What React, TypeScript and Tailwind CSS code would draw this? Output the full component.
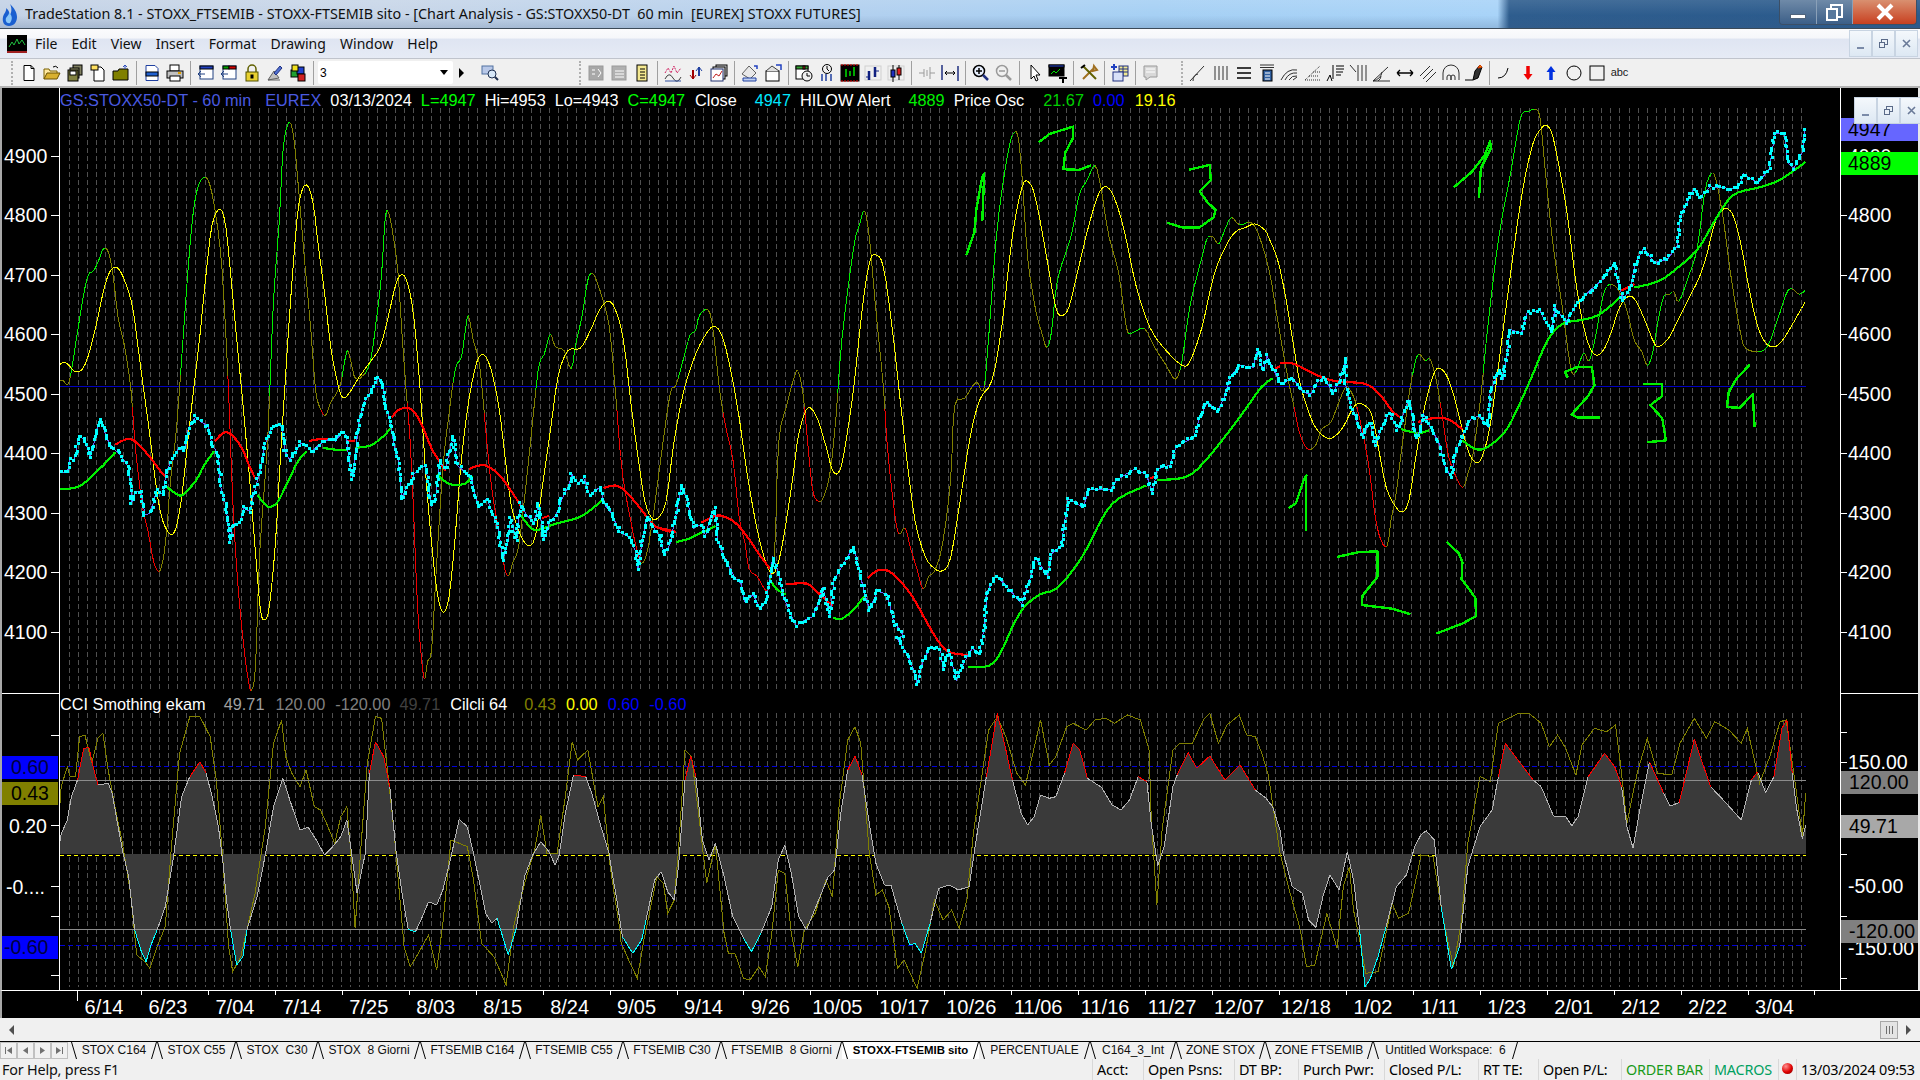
import React from "react";

type P = [number, number];
const pairs = (a: number[], fx: (x: number) => number, fy: (y: number) => number): P[] => {
  const o: P[] = [];
  for (let i = 0; i + 1 < a.length; i += 2) o.push([fx(a[i]), fy(a[i + 1])]);
  return o;
};
const yz = (y: number) => y / 2.703;
const z7 = (a: number[]) => pairs(a, (x) => 50 + x / 2.529, (y) => 110 + yz(y));
const z8 = (a: number[]) => pairs(a, (x) => 660 + x / 2.529, (y) => 110 + yz(y));
const z9 = (a: number[]) => pairs(a, (x) => 1270 + x / 2.703, (y) => 100 + yz(y));
const z4 = (a: number[]) => pairs(a, (x) => x / 2.45, (y) => 680 + y / 3);
const z10 = (a: number[]) => pairs(a, (x) => 620 + x / 2.306, (y) => 700 + y / 3);
const z6 = (a: number[]) => pairs(a, (x) => 1280 + x / 2.45, (y) => 680 + y / 3);

const smooth = (p: P[]): P[] => {
  const o: P[] = [];
  for (let i = 0; i < p.length - 1; i++) {
    const a = p[Math.max(0, i - 1)], b = p[i], c = p[i + 1], d = p[Math.min(p.length - 1, i + 2)];
    for (let k = 0; k < 3; k++) {
      const t = k / 3, t2 = t * t, t3 = t2 * t;
      o.push([
        0.5 * (2 * b[0] + (c[0] - a[0]) * t + (2 * a[0] - 5 * b[0] + 4 * c[0] - d[0]) * t2 + (3 * b[0] - a[0] - 3 * c[0] + d[0]) * t3),
        0.5 * (2 * b[1] + (c[1] - a[1]) * t + (2 * a[1] - 5 * b[1] + 4 * c[1] - d[1]) * t2 + (3 * b[1] - a[1] - 3 * c[1] + d[1]) * t3),
      ]);
    }
  }
  o.push(p[p.length - 1]);
  return o;
};
const str = (p: P[]) => p.map(([x, y]) => `${x.toFixed(1)},${y.toFixed(1)}`).join(" ");

const osc = smooth([
  ...z7([22,735,32,730,45,742,55,700,68,610,85,500,97,445,110,435,122,410,135,375,148,385,160,450,172,560,185,620,195,680,205,760,215,900,225,1000,235,1080,248,1140,262,1220,275,1248,285,1220,295,1140,305,1000,320,860,335,640,350,420,362,280,375,205,392,182,405,205,420,290,435,430,450,720,462,1050,475,1280,490,1450,503,1550,510,1568,520,1500,530,1200,550,900,565,520,580,300,590,100,605,33,617,80,630,230,645,420,660,600,672,760,685,810,697,825,710,790,722,770,735,740,745,680,753,650,763,690,772,725,790,720,810,680,825,570,838,450,848,290,857,280,868,340,880,440,890,600,900,750,910,880,920,1100,930,1350,945,1535,955,1490,965,1460,975,1280,985,1100,995,950,1008,830,1025,700,1040,670,1050,600,1058,555,1070,620,1085,680,1095,780,1105,900,1118,1030,1135,1140,1150,1240,1160,1258,1170,1225,1185,1180,1200,1050,1215,900,1235,700,1250,660,1265,606,1278,640,1300,650,1318,700,1330,630,1345,560,1360,460,1372,442,1385,470,1400,520,1415,590,1430,760,1440,900,1450,1000,1465,1090,1480,1170,1495,1225,1510,1195,1525,1100]),
  ...z8([0,960,25,770,40,745,60,670,75,610,90,595,100,555,122,540,135,600,150,750,165,850,185,950,200,1100,215,1170,225,1240,245,1260,265,1295,275,1290,290,1190,300,900,320,800,340,720,350,707,362,770,372,880,385,1020,397,1055,412,1050,430,980,445,830,460,620,490,370,505,310,517,272,530,350,545,530,565,750,575,910,590,1060,603,1145,620,1130,635,1190,650,1240,665,1295,680,1260,695,1245,715,1170,735,1000,745,800,770,780,800,735,815,760,825,700,850,350,870,180,885,90,895,62,905,70,915,170,930,400,950,540,965,600,978,642,990,600,1005,460,1040,340,1060,230,1080,190,1100,150,1115,210,1135,340,1160,440,1180,590,1195,602,1225,590,1250,640,1280,690,1303,728,1320,680,1340,530,1370,400,1385,345,1400,345,1413,362,1430,320,1445,290,1465,310,1495,305,1515,340,1540,430]),
  ...z9([15,560,30,650,50,760,65,830,80,900,95,935,108,945,125,930,140,890,165,870,185,820,205,775,220,790,235,830,255,920,270,1010,285,1130,300,1190,317,1205,328,1130,340,1070,355,950,370,840,380,770,395,700,405,688,420,705,433,700,450,760,465,850,480,950,495,1000,520,1048,535,1010,550,950,570,800,590,600,620,360,650,200,665,110,680,40,700,30,718,25,730,50,745,200,765,390,790,560,812,720,825,738,840,700,850,685,863,705,880,640,900,530,915,500,935,505,955,540,970,590,985,650,1005,680,1020,718,1035,680,1050,590,1065,530,1080,525,1092,518,1105,545,1130,480,1155,400,1175,250,1192,200,1205,215,1225,320,1245,470,1270,620,1285,670,1320,680,1345,665,1370,600,1395,525,1410,510,1430,525,1447,515]),
]);
const yellow = smooth([
  ...z7([22,690,35,682,48,690,60,705,78,705,95,670,115,590,135,490,150,440,165,425,180,440,195,480,210,540,225,660,240,780,255,900,270,1030,285,1110,305,1147,320,1125,335,1030,350,880,365,740,380,600,395,440,410,310,430,268,445,320,460,480,475,650,490,820,505,1000,520,1200,532,1350,543,1378,555,1340,570,1170,585,900,600,650,615,420,630,250,648,202,665,250,680,380,695,500,710,640,730,750,743,778,760,760,780,725,810,680,835,640,855,560,875,470,890,445,905,470,920,560,935,740,950,980,965,1170,980,1310,995,1358,1010,1310,1025,1150,1040,950,1060,780,1080,680,1097,662,1115,700,1135,800,1150,930,1165,1060,1180,1120,1195,1160,1212,1178,1228,1150,1245,1020,1265,870,1285,720,1310,650,1340,645,1365,600,1390,540,1412,517,1430,540,1450,620,1470,800,1490,960,1505,1060,1520,1100,1535,1105]),
  ...z8([15,1060,35,900,60,760,90,660,120,600,140,585,160,620,180,710,200,830,220,980,245,1130,270,1230,290,1250,310,1170,335,1000,350,880,370,810,385,810,400,840,420,910,435,970,450,982,465,930,490,750,510,550,530,410,548,393,565,425,585,570,605,760,625,950,645,1110,670,1205,695,1240,715,1245,735,1210,760,1050,785,880,810,780,840,730,865,580,890,350,915,210,932,195,950,240,975,380,1000,530,1017,555,1035,530,1060,420,1085,310,1110,225,1130,208,1150,240,1175,330,1205,480,1240,590,1280,650,1320,690,1340,680,1370,590,1400,450,1430,370,1455,330,1480,318,1505,308,1530,325]),
  ...z9([0,380,20,430,40,520,60,640,80,760,100,830,120,880,140,905,160,915,180,905,200,880,220,840,235,822,255,825,275,850,295,950,315,1050,340,1100,357,1113,375,1085,395,960,420,820,445,735,462,727,480,750,500,810,520,890,540,960,560,980,575,960,595,880,620,700,650,470,680,260,710,120,735,75,750,70,765,100,785,200,805,320,825,480,845,600,865,670,885,690,905,670,925,620,945,560,970,530,990,545,1015,600,1040,660,1055,665,1080,640,1105,590,1130,540,1160,480,1180,420,1200,340,1220,300,1238,295,1255,320,1275,400,1295,510,1315,600,1335,650,1360,668,1385,650,1410,610,1430,575,1447,545]),
]);
const trendGreen: P[][] = [
  z7([22,1025,60,1022,85,1010,110,985,135,960,165,925]),
  z7([295,1018,315,1035,332,1042,350,1025,370,1000,390,960,415,922]),
  z7([525,1040,540,1062,556,1073,575,1060,595,1020,615,975,630,945,650,922]),
  z7([690,913,720,918,750,918]),
  z7([772,913,810,907,840,885,862,860]),
  z7([980,985,1000,1005,1020,1013,1050,1010,1068,990]),
  z7([1190,1095,1215,1128,1235,1135,1280,1118,1340,1100,1380,1070,1400,1050]),
  z8([40,1168,70,1160,100,1145,140,1125]),
  z8([278,1270,295,1295,318,1310]),
  z8([437,1373,460,1375,490,1350,520,1310]),
  z8([778,1505,830,1503,860,1470,890,1400,920,1345,960,1310,1000,1295,1040,1250,1080,1185,1120,1100,1160,1050,1230,1015]),
  z8([1257,1000,1320,995,1360,970,1420,895,1480,810,1520,750,1550,725]),
  z9([355,890,400,900,430,893]),
  z9([520,920,545,938,570,945,600,930,640,890,680,810,715,730,750,650,790,605,840,595,890,580,945,535]),
  z9([985,507,1050,490,1100,455,1155,405,1200,330,1235,275,1265,250,1320,237,1370,220,1410,195,1447,168]),
];
const trendRed: P[][] = [
  z7([165,905,185,893,205,890,225,905,250,935,275,970,295,995]),
  z7([417,895,435,875,450,872,470,890,490,925,505,965,520,998]),
  z7([655,895,680,890,710,890]),
  z7([750,897,772,893]),
  z7([865,830,880,812,900,805,920,815,940,850,965,915,985,950,1000,975]),
  z7([1060,970,1090,960,1110,965,1135,985,1160,1020,1185,1060,1200,1085]),
  z7([1245,1103,1262,1097]),
  z7([1400,1022,1430,1015,1455,1030,1480,1060,1510,1100,1530,1125,1568,1140]),
  z8([0,1130,40,1140]),
  z8([105,1115,140,1097,165,1100,195,1120,225,1160,250,1200,278,1240]),
  z8([318,1282,370,1280,395,1300,420,1325,437,1340]),
  z8([525,1265,550,1245,575,1245,600,1265,635,1310,670,1375,700,1430,730,1465,780,1473]),
  z8([1240,995,1257,990]),
  z8([1555,700,1568,692]),
  z9([27,712,60,712,90,725,130,745,175,760,220,763,265,770,300,800,330,840,355,860]),
  z9([400,870,440,860,480,862,520,890]),
  z9([950,515,985,497]),
];
const price: P[] = [
  ...z7([22,970,30,980,45,975,50,945,60,945,65,930,72,880,85,890,95,915,102,940,110,905,118,875,125,835,135,860,145,890,158,912,175,930,190,950,200,970,207,1060,218,1030,232,1035,240,1095,252,1090,262,1060,270,1025,285,1040,295,975,310,945,325,915,340,920,350,860,368,830,385,845,400,855,410,905,425,930,432,1020,445,1070,455,1165,462,1120,480,1115,490,1075,505,1085,515,1040,530,980,545,900,558,865,570,850,585,855,595,925,605,945,620,925,635,900,650,905,660,925,680,905,705,890,722,895,740,870,750,880,755,940,765,995,772,935,780,850,795,790,815,755,830,722,842,745,852,810,862,850,870,905,880,945,885,985,890,1055,900,1020,915,1010,920,985,935,970,950,960,965,1070,975,1050,985,950,1000,970,1010,925,1020,885,1030,960,1045,975,1065,990,1075,1040,1085,1075,1105,1050,1120,1090,1135,1140,1145,1215,1155,1185,1165,1105,1180,1165,1190,1065,1205,1095,1225,1115,1235,1065,1250,1160,1265,1110,1280,1095,1295,1050,1310,1020,1320,985,1335,1010,1350,995,1365,1040,1390,1020,1405,1070,1420,1090,1440,1140,1465,1155,1480,1190,1487,1240,1500,1150,1510,1100,1530,1135,1545,1155]),
  ...z8([0,1150,10,1200,25,1175,45,1070,55,1015,70,1060,85,1130,105,1120,115,1150,130,1090,140,1080,145,1160,155,1190,170,1225,190,1265,205,1280,215,1330,235,1310,255,1350,270,1320,285,1210,300,1250,310,1310,325,1350,345,1395,365,1380,385,1370,400,1335,412,1290,430,1370,440,1270,465,1225,490,1180,505,1250,518,1310,530,1350,550,1300,575,1310,590,1380,615,1420,600,1430,625,1470,640,1510,650,1550,665,1490,685,1450,710,1460,715,1510,730,1465,750,1540,770,1490,790,1455,808,1470,820,1400,828,1300,850,1260,870,1280,895,1310,915,1335,935,1270,950,1210,965,1235,980,1260,990,1200,1015,1175,1025,1100,1032,1050,1070,1075,1085,1025,1140,1025,1155,1000,1200,970,1230,985,1245,1035,1258,970,1290,960,1305,910,1350,885,1365,830,1385,790,1410,815,1430,770,1440,725,1465,690,1500,695,1512,645,1525,705,1535,665]),
  ...z9([30,770,60,750,90,790,110,795,130,760,145,750,170,790,185,765,205,700,205,770,220,830,240,880,250,910,270,870,285,935,300,890,322,845,345,890,375,810,385,855,398,915,415,850,445,905,460,935,470,985,490,1020,500,960,520,905,545,860,565,855,590,885,595,790,620,730,630,755,650,620,680,630,695,575,730,570,745,600,762,625,770,560,800,600,830,550,870,510,900,485,930,440,940,490,955,540,975,505,985,450,1010,400,1040,440,1075,430,1100,395,1110,315,1145,240,1160,265,1190,235,1265,240,1280,200,1320,225,1350,185,1365,90,1390,90,1400,170,1415,185,1440,140,1445,75]),
];
const dotsPath = (() => {
  let seed = 7;
  const r = () => {
    seed = (seed * 16807) % 2147483647;
    return seed / 2147483647 - 0.5;
  };
  let d = "";
  for (let i = 0; i < price.length - 1; i++) {
    const [a, b] = price[i], [c, e] = price[i + 1];
    const len = Math.hypot(c - a, e - b);
    const n = Math.max(1, Math.round(len / 3.6));
    for (let k = 0; k < n; k++) {
      const x = a + ((c - a) * k) / n + r() * 2.5;
      const y = b + ((e - b) * k) / n + r() * 3.5;
      d += `M${Math.round(x - 1.5)} ${Math.round(y - 1.5)}h3v3h-3z`;
    }
  }
  return d;
})();
const hand: P[][] = [
  z8([775,392,795,330,800,270,815,180,820,172,815,300]),
  z8([958,87,985,65,1045,45,1045,75,1025,115,1020,160,1060,162,1090,150]),
  z8([1337,162,1390,148,1393,190,1365,220,1385,250,1405,270,1400,290,1365,317,1320,317,1283,305]),
  z9([497,236,545,195,580,150,595,112,597,130,570,185,565,265]),
  z9([50,1103,70,1090,90,1030,98,1015,97,1165]),
  z9([182,1235,240,1222,290,1220,290,1290,250,1340,248,1365,330,1375,380,1390]),
  z9([478,1195,510,1225,520,1250,518,1295,555,1345,557,1395,520,1415,450,1442]),
  z9([805,750,797,735,830,722,870,722,877,770,860,800,815,850,830,858,893,858]),
  z9([1008,768,1060,768,1060,800,1028,825,1060,860,1070,920,1020,925]),
  z9([1297,715,1260,755,1240,790,1235,830,1270,832,1305,795,1310,885]),
];
const oscPaths = (() => {
  let g = "", o = "", r = "";
  for (let i = 0; i < osc.length - 1; i++) {
    const [a, b] = osc[i], [c, e] = osc[i + 1];
    const s = `M${a.toFixed(1)} ${b.toFixed(1)}L${c.toFixed(1)} ${e.toFixed(1)}`;
    if (e < b && e < 370) g += s;
    else if (e > b && e > 413) r += s;
    else o += s;
  }
  return { g, o, r };
})();

const cci: P[] = [
  ...z4([145,495,150,462,165,420,175,350,190,300,205,205,218,203,230,270,240,315,265,310,275,340,285,410,300,510,315,590,330,750,345,810,358,845,370,795,385,750,405,680,425,530,445,350,465,290,490,245,505,280,520,350,535,440,547,555,555,660,565,750,580,855,595,830,605,750,630,650,650,525,670,380,693,295,710,360,735,450,755,442,775,480,795,525,815,500,835,470,850,420,862,525,875,640,895,520,905,280,920,185,940,230,955,320,970,510,985,640,1000,748,1018,755,1035,710,1050,665,1070,675,1085,630,1105,530,1125,418,1145,440,1160,520,1175,610,1190,700,1205,730,1218,715,1245,825,1265,745,1285,590,1305,525,1325,485,1345,515,1360,555,1370,525,1385,400,1405,285,1435,290,1450,340,1470,430,1492,520,1500,580,1510,650,1525,770,1550,820]),
  ...z10([50,720,60,660,80,540,95,515,110,575,125,600,135,500,150,240,163,168,175,230,190,420,205,480,220,430,240,530,260,650,285,715,303,755,325,700,350,620,365,480,380,435,395,520,412,650,430,690,455,610,480,530,495,510,510,330,525,210,542,168,558,225,575,370,590,490,610,555,625,555,650,670,668,735,680,730,695,760,715,670,735,565,760,555,780,570,805,560,820,430,845,230,870,40,890,150,905,240,925,340,940,375,955,350,970,285,990,295,1005,290,1025,220,1045,130,1060,150,1078,235,1110,262,1135,315,1155,330,1175,300,1195,230,1215,245,1225,370,1240,498,1255,440,1275,260,1285,225,1310,158,1330,205,1360,168,1395,240,1430,195,1465,270,1490,295,1505,320]),
  ...z6([0,450,8,520,30,620,55,640,70,720,88,742,105,650,122,585,145,630,165,515,180,600,195,750,208,920,220,900,240,830,260,740,285,620,310,585,330,500,345,465,358,452,378,480,395,680,420,868,440,800,460,560,470,520,490,440,520,390,535,290,552,190,580,235,620,300,640,320,670,408,700,410,715,437,730,410,755,290,795,220,820,260,837,320,850,440,865,505,880,400,905,245,940,340,955,378,978,368,1015,178,1055,320,1090,365,1130,420,1155,300,1170,275,1190,338,1210,290,1230,145,1242,120,1255,280,1265,380,1280,477,1288,435]),
];
const olive: P[] = [
  ...z4([145,400,150,320,165,260,172,290,185,290,195,170,208,165,225,250,240,175,252,160,265,270,280,370,300,490,320,640,335,825,355,845,367,865,385,800,405,740,420,500,440,220,465,110,490,110,515,170,530,300,545,520,560,800,570,875,590,830,625,640,650,440,670,190,690,120,700,230,715,280,735,320,750,270,770,380,785,390,800,430,820,490,835,410,850,380,860,525,870,745,885,490,900,250,920,110,935,115,950,280,965,450,990,800,1005,860,1020,830,1050,765,1070,870,1085,730,1105,480,1125,490,1145,500,1160,600,1180,790,1210,830,1240,915,1260,730,1290,590,1310,510,1325,405,1340,520,1365,520,1385,350,1402,185,1415,240,1440,210,1465,380,1478,350,1495,560,1520,760]),
  ...z10([0,720,20,780,40,835,55,720,85,530,100,550,110,640,125,600,135,450,150,150,165,170,180,330,200,550,220,430,240,700,250,760,265,760,285,835,300,840,320,800,335,830,350,700,365,510,380,520,395,700,410,800,425,690,450,640,475,540,490,590,505,320,525,120,542,80,555,130,575,460,590,585,605,570,620,620,640,805,655,780,685,865,705,750,725,600,745,660,765,630,782,685,800,600,815,400,850,90,870,50,890,110,915,220,935,255,970,60,990,195,1005,170,1030,80,1045,70,1075,90,1095,60,1120,55,1140,70,1170,45,1200,60,1220,150,1225,350,1238,615,1250,390,1275,150,1290,130,1320,130,1345,60,1360,40,1380,130,1400,75,1428,45,1445,105,1465,110,1480,160,1495,225]),
  ...z6([0,520,25,640,50,750,65,860,85,855,100,780,115,700,140,805,155,620,170,560,180,690,195,780,210,880,240,875,275,670,290,715,315,700,340,560,345,525,375,530,400,720,425,860,445,720,460,490,490,290,515,305,535,130,560,115,585,100,610,100,640,130,660,200,680,165,700,205,725,285,740,195,770,145,800,155,822,135,835,260,850,430,875,280,900,175,925,280,960,285,980,190,1015,115,1045,175,1065,125,1100,150,1130,190,1145,145,1175,310,1200,230,1225,125,1240,120,1260,290,1280,470,1288,340]),
];
const cciPaths = (() => {
  let w = "", r = "", c = "";
  const add = (a: number, b: number, x: number, y: number, col: number) => {
    const s = `M${a.toFixed(1)} ${b.toFixed(1)}L${x.toFixed(1)} ${y.toFixed(1)}`;
    if (col === 0) w += s;
    else if (col === 1) r += s;
    else c += s;
  };
  for (let i = 0; i < cci.length - 1; i++) {
    const [a, b] = cci[i], [x, y] = cci[i + 1];
    const mid = (b + y) / 2;
    add(a, b, x, y, mid < 780 ? 1 : mid > 929 ? 2 : 0);
  }
  return { w, r, c };
})();
const area = `60,854 ${str(cci)} ${cci[cci.length - 1][0].toFixed(1)},854`;

const gridXs: number[] = [];
for (let x = 68.5; x < 1807; x += 9.07) gridXs.push(Math.round(x) + 0.5);

const Chart = () => (
  <svg viewBox="60 88 1780 902" className="block w-[1780px] h-[902px]" fill="none" shapeRendering="crispEdges">
    {gridXs.map((x) => (
      <g key={x} stroke="#505050" strokeDasharray="5 3">
        <line x1={x} x2={x} y1={108} y2={692} />
        <line x1={x} x2={x} y1={713} y2={987} />
      </g>
    ))}
    <line x1={60} x2={1806} y1={386.5} y2={386.5} stroke="#0000c0" />
    <path d={oscPaths.o} stroke="#808000" />
    <path d={oscPaths.r} stroke="#f00000" />
    <path d={oscPaths.g} stroke="#00f000" />
    <polyline points={str(yellow)} stroke="#ffff00" />
    {trendGreen.map((t, i) => (
      <polyline key={i} points={str(smooth(t))} stroke="#00f000" strokeWidth={2.2} />
    ))}
    {trendRed.map((t, i) => (
      <polyline key={i} points={str(smooth(t))} stroke="#ff0000" strokeWidth={2.2} />
    ))}
    <polyline points={str(price)} stroke="#6464ff" />
    <path d={dotsPath} fill="#00ffff" />
    {hand.map((t, i) => (
      <polyline key={i} points={str(t)} stroke="#00f000" strokeWidth={2.4} strokeLinejoin="round" />
    ))}

    <line x1={60} x2={1806} y1={766.5} y2={766.5} stroke="#0000d8" strokeDasharray="5 3" />
    <line x1={60} x2={1806} y1={945.5} y2={945.5} stroke="#0000d8" strokeDasharray="5 3" />
    <line x1={60} x2={1806} y1={855.5} y2={855.5} stroke="#ffff00" strokeDasharray="4 3" />
    <polygon points={area} fill="#3a3a3a" />
    <polyline points={str(olive)} stroke="#808000" />
    <line x1={60} x2={1806} y1={780.5} y2={780.5} stroke="#8c8c8c" />
    <line x1={60} x2={1806} y1={929.5} y2={929.5} stroke="#8c8c8c" />
    <path d={cciPaths.w} stroke="#b4b4b4" />
    <path d={cciPaths.r} stroke="#ff0000" />
    <path d={cciPaths.c} stroke="#00ffff" />
  </svg>
);

/* ---------- toolbar icons ---------- */
const S = ({ children }: { children: React.ReactNode }) => (
  <span className="flex w-[23px] h-[22px] items-center justify-center shrink-0">
    <svg width="20" height="20" viewBox="0 0 20 20" fill="none" stroke="#000" strokeWidth="1">
      {children}
    </svg>
  </span>
);
const Sep = () => <span className="w-[8px] h-[24px] shrink-0 flex justify-center"><span className="w-px h-full bg-[#a0a0a0]" /></span>;
const Grip = ({ cls }: { cls: string }) => (
  <span className={`w-[3px] h-[24px] shrink-0 block border-l-2 border-dotted border-[#b0b0b0] ${cls}`} />
);
const gray = "#9a9a9a";
const T1 = [
  <><path d="M5 2.5h7l3 3v12H5z" fill="#fff" /><path d="M12 2.5v3h3" /></>,
  <><path d="M2 16V6h5l1 2h7v2" fill="#ffe9a0" stroke="#7a6000" /><path d="M2 16l3-6h13l-3 6z" fill="#d8b030" stroke="#6a5000" /><path d="M11 4q3-2 5 1" stroke="#000" /></>,
  <><rect x="8" y="2" width="9" height="10" fill="#808060" /><rect x="5" y="5" width="9" height="10" fill="#a0a070" /><rect x="3" y="7" width="10" height="11" fill="#808040" /><rect x="5" y="8" width="6" height="4" fill="#fff" /></>,
  <><path d="M6 4h7l3 3v11H6z" fill="#fff" /><rect x="3" y="2" width="7" height="5" fill="#ffe060" /></>,
  <><path d="M2 8h5l1-2h9v11H2z" fill="#808000" /><path d="M14 6V2m-2 2 2-2 2 2" stroke="#3050c0" /></>,
];
const T2 = [
  <><path d="M4 2.5h9l3 3v12H4z" fill="#fff" stroke="#2040a0" /><rect x="4" y="9" width="12" height="4" fill="#2060d0" /></>,
  <><rect x="5" y="2" width="9" height="6" fill="#fff" /><rect x="2" y="8" width="16" height="7" fill="#c0c0c0" /><rect x="5" y="13" width="10" height="5" fill="#fff" /><path d="M13 10h3" stroke="#e0a000" strokeWidth="2" /></>,
];
const T3 = [
  <><rect x="4" y="3" width="13" height="13" fill="#fff" stroke="#204080" /><rect x="4" y="3" width="13" height="3" fill="#2040c0" /><path d="M2 11h7M2 11l3-3M2 11l3 3" stroke="#204080" /></>,
  <><rect x="4" y="3" width="13" height="13" fill="#fff" stroke="#204080" /><rect x="4" y="3" width="6" height="3" fill="#00a000" /><rect x="10" y="3" width="7" height="3" fill="#d00000" /><path d="M2 11h7M2 11l3-3M2 11l3 3" stroke="#204080" /></>,
  <><path d="M6 9V6a4 4 0 0 1 8 0v3" stroke="#606000" strokeWidth="1.5" /><rect x="4" y="9" width="12" height="9" fill="#e8d030" stroke="#505000" /><rect x="9" y="12" width="2" height="3" fill="#000" /></>,
  <><path d="M3 17l6-9 5 7z" fill="#c0c0c0" stroke="#606060" /><path d="M9 10l6-7 2 2-6 7z" fill="#5070d0" stroke="#203080" /><path d="M3 17h12" stroke="#606060" /></>,
  <><rect x="3" y="7" width="7" height="7" fill="#20a030" /><rect x="9" y="4" width="7" height="7" fill="#2040d0" /><rect x="10" y="11" width="7" height="7" fill="#d02020" /><rect x="4" y="2" width="6" height="6" fill="#f0e020" /></>,
];
const TMag = <><rect x="2" y="3" width="11" height="8" fill="#b8c8e8" stroke="#5070a0" /><circle cx="12" cy="11" r="4" fill="#d8e8f8" stroke="#203050" /><path d="M15 14l3 3" strokeWidth="2" stroke="#203050" /></>;
const T4 = [
  <><rect x="3" y="3" width="14" height="14" fill="#a8a8a8" stroke={gray} /><path d="M6 7h3M6 11h3M12 6l3 4-3 4" stroke="#fff" /></>,
  <><rect x="3" y="3" width="14" height="14" fill="#b0b0b0" stroke={gray} /><path d="M6 8h9M6 11h9M6 14h9" stroke="#fff" /></>,
  <><rect x="5" y="2" width="10" height="16" fill="#f4e890" /><path d="M8 6h5M8 9h5M8 12h5M8 15h5" /></>,
];
const T5 = [
  <><path d="M2 10l3-5 3 5 3-7 3 7 4-5" stroke="#d02060" strokeDasharray="2 1" /><path d="M2 16q4-8 8-1t8-1" stroke="#404040" /><path d="M2 18h16" stroke="#3050a0" /></>,
  <><path d="M7 16V7" stroke="#a00000" strokeWidth="2" /><path d="M4 12l3 4 3-4" stroke="#a00000" /><path d="M13 4v9" stroke="#2040a0" strokeWidth="2" /><path d="M10 8l3-4 3 4" stroke="#2040a0" /></>,
  <><rect x="7" y="2" width="11" height="11" fill="#d0d0d0" /><rect x="4" y="4" width="12" height="12" fill="#e0e0e0" /><rect x="2" y="6" width="12" height="12" fill="#fff" stroke="#203070" /><path d="M4 15l3-4 3 2 3-5" stroke="#c02020" /></>,
];
const T6 = [
  <><path d="M2 11l7-8 7 7-6 6z" fill="#e8e8e8" stroke="#606060" /><path d="M14 3l3 0 0 3" stroke="#2040c0" strokeWidth="1.5" /><path d="M3 15h13v3H3z" fill="#c0d0f0" stroke="#2040a0" /></>,
  <><rect x="3" y="8" width="13" height="10" fill="#fff" /><path d="M3 8l6-5 7 5" fill="#e0e0e0" stroke="#404040" /><path d="M13 2h5v5" stroke="#2040c0" strokeWidth="1.5" /></>,
];
const T7 = [
  <><rect x="2" y="3" width="12" height="13" fill="#fff" /><rect x="2" y="3" width="12" height="3" fill="#30a030" /><rect x="9" y="3" width="2" height="3" fill="#d02020" /><circle cx="13" cy="13" r="5" fill="#f0f0f0" /><path d="M13 10v3h3" /></>,
  <><circle cx="10" cy="6" r="4.5" fill="#f0f0f0" /><path d="M10 3v3l2 2" /><path d="M5 11v7M9 11v7M14 11v7" stroke="#2040a0" strokeWidth="1.5" /></>,
  <><rect x="1" y="2" width="18" height="16" fill="#000" /><path d="M1 2h18M1 18h18" stroke="#e00000" strokeDasharray="2 1" /><path d="M6 6v8M10 8v5M14 4v9" stroke="#00e000" strokeWidth="1.5" /></>,
  <><rect x="2" y="3" width="16" height="14" fill="#f0f0f0" stroke="#d0d0d0" /><path d="M6 8v9M12 4v10" stroke="#102080" strokeWidth="2.5" /><path d="M3 14h3M12 8h4" stroke="#102080" /></>,
  <><rect x="2" y="3" width="16" height="14" fill="#f0f0f0" stroke="#d0d0d0" /><path d="M7 2v17M13 2v15" stroke="#000" /><rect x="5" y="7" width="4" height="7" fill="#2030c0" /><rect x="11" y="5" width="4" height="7" fill="#e02020" /></>,
];
const T8 = [
  <><path d="M2 10h5M13 10h5M7 6v8M13 4v12M10 7v6" stroke={gray} /></>,
  <><path d="M2 2v15M18 3v15" stroke="#203080" strokeWidth="1.5" /><path d="M5 10h10M5 10l2-2M5 10l2 2M15 10l-2-2M15 10l-2 2" /></>,
];
const T9 = [
  <><circle cx="8" cy="8" r="5.5" fill="#e8f0ff" stroke="#000" strokeWidth="1.5" /><path d="M8 5v6M5 8h6" strokeWidth="1.5" /><path d="M12 12l5 5" strokeWidth="2.5" stroke="#203080" /></>,
  <><circle cx="8" cy="8" r="5.5" fill="#f0f0f0" stroke={gray} strokeWidth="1.5" /><path d="M5 8h6" stroke={gray} strokeWidth="1.5" /><path d="M12 12l5 5" strokeWidth="2.5" stroke={gray} /></>,
];
const T10 = [
  <path d="M6 2v14l3-3 2 5 2-1-2-5h4z" fill="#fff" stroke="#000" />,
  <><rect x="1" y="2" width="15" height="11" fill="#000" /><rect x="1" y="2" width="15" height="2" fill="#2040d0" /><path d="M3 11l3-3 2 2 4-4" stroke="#00e000" /><path d="M11 14h8v2h-3v4h-2v-4h-3z" fill="#000" stroke="none" /></>,
];
const T11 = [
  <><path d="M4 16L14 6M15 3l3 4-4 1z" stroke="#a07020" strokeWidth="2" /><path d="M4 3l13 13" stroke="#606000" strokeWidth="2" /><path d="M2 5l4-3" stroke="#000" strokeWidth="2" /></>,
];
const T12 = <><rect x="9" y="3" width="9" height="10" fill="#f0e890" stroke="#203080" /><path d="M9 6h9M9 9h9M13 3v10" stroke="#203080" /><rect x="3" y="9" width="10" height="9" fill="#d8e0f8" stroke="#203080" /><path d="M1 4h6M4 1v6" stroke="#2040c0" strokeWidth="2" /></>;
const T13 = <><path d="M3 3h13v11H9l-4 3v-3H3z" fill="#d8d8d8" stroke={gray} /><path d="M5 6h9M5 9h9" stroke="#fff" /></>;
const T14 = [
  <path d="M2 18L16 3M5 18q0-6 5-7" stroke="#303030" />,
  <path d="M4 3v14M8 3v14M12 3v14M16 3v14" stroke="#303030" />,
  <path d="M3 5h14M3 10h14M3 15h14" stroke="#000" strokeWidth="1.3" />,
  <><path d="M3 2h14M3 4.5h14" stroke="#303030" /><rect x="6" y="7" width="9" height="11" fill="#3060a0" /><path d="M8 10h5M8 13h5M8 16h5" stroke="#fff" /></>,
  <path d="M1 17q6-12 16-10M5 17q4-8 12-7M9 17q3-5 8-4M13 17l4-3" stroke="#303030" />,
  <><path d="M2 17L17 3" stroke="#303030" strokeDasharray="1 1" /><path d="M2 17h16M6 13h10M10 9h7" stroke="#303030" strokeDasharray="1 1" /></>,
  <path d="M1 18l3-6 2 6M7 16V2M10 3h8M10 6h8M10 9h7M10 12h5" stroke="#000" />,
  <path d="M1 2l6 7M9 2v16M13 2v16M17 2v16" stroke="#303030" />,
  <path d="M1 18L16 4M1 18h17M1 18q8-2 9-9M6 18q3-2 3-5" stroke="#303030" />,
  <path d="M2 10h16M2 10l3-3M2 10l3 3M18 10l-3-3M18 10l-3 3" stroke="#000" strokeWidth="1.3" />,
  <path d="M2 13L12 3M5 16L15 6M8 19L18 9" stroke="#303030" />,
  <path d="M2 17V10a8 8 0 0 1 16 0v7M6 17v-3a2 2 0 0 1 4 0v3M10 17v-3a2 2 0 0 1 4 0v3" stroke="#303030" />,
  <><path d="M1 17h8" /><path d="M9 17l2-9 5-6 2 2-4 11z" fill="#303030" /><path d="M14 5l2-3 2 2z" fill="#e0b000" stroke="#e03000" /></>,
];
const TEnd = [
  <path d="M3 15q8 0 10-10" stroke="#000" />,
  <><path d="M10 3v9" stroke="#f00000" strokeWidth="3.5" /><path d="M5.5 11h9L10 17z" fill="#f00000" stroke="none" /></>,
  <><path d="M10 17V8" stroke="#0030e0" strokeWidth="3.5" /><path d="M5.5 9h9L10 3z" fill="#0030e0" stroke="none" /></>,
  <circle cx="10" cy="10" r="7" fill="#f0f0f0" />,
  <rect x="3" y="3" width="14" height="14" />,
];
const row = (a: React.ReactNode[]) => a.map((c, i) => <S key={i}>{c}</S>);

const Toolbar = () => (
  <div className="flex items-center h-[30px] bg-[#f0f0f0] border-t border-[#c0c4cc] border-b-2 border-b-[#b4b4b4] pl-[11px] shrink-0">
    <Grip cls="mr-[3px]" />
    {row(T1)}
    <Sep />
    {row(T2)}
    <Sep />
    {row(T3)}
    <Sep />
    <div className="relative w-[135px] h-[23px] bg-white ml-[1px] rounded-[2px] flex items-center justify-between pl-[2px] pr-[5px] text-[12px] font-['Liberation_Sans',sans-serif] text-black shrink-0">
      3
      <span className="w-0 h-0 border-x-[4px] border-x-transparent border-t-[5px] border-t-black" />
    </div>
    <span className="w-0 h-0 ml-[6px] border-y-[5px] border-y-transparent border-l-[5px] border-l-black" />
    <span className="ml-[14px]"><S>{TMag}</S></span>
    <span className="ml-[78px]"><Grip cls="mr-[2px]" /></span>
    {row(T4)}
    <Sep />
    {row(T5)}
    <Sep />
    {row(T6)}
    <Sep />
    {row(T7)}
    <Sep />
    {row(T8)}
    <Sep />
    {row(T9)}
    <Sep />
    {row(T10)}
    <Sep />
    {row(T11)}
    <Sep />
    <S>{T12}</S>
    <Sep />
    <S>{T13}</S>
    <span className="ml-[19px]"><Grip cls="mr-[2px]" /></span>
    {row(T14)}
    <Sep />
    {row(TEnd)}
    <span className="w-[23px] text-center text-[11px] text-[#202020] font-['Liberation_Sans',sans-serif]">abc</span>
  </div>
);

/* ---------- small window buttons ---------- */
const WinBtns = ({ cls }: { cls: string }) => (
  <div className={`absolute flex ${cls}`}>
    {[
      <span className="w-[7px] h-[2px] bg-[#7a8aa8] mt-[8px]" />,
      <svg width="9" height="9" viewBox="0 0 9 9" fill="none" stroke="#5a6a88"><rect x="2.5" y=".5" width="6" height="5" /><rect x=".5" y="3.5" width="5" height="5" fill="#eaf0f8" /></svg>,
      <svg width="9" height="9" viewBox="0 0 9 9" fill="none" stroke="#6a7a98" strokeWidth="1.6"><path d="M1 1l7 7M8 1L1 8" /></svg>,
    ].map((g, i) => (
      <span key={i} className="w-[23px] h-[27px] flex items-center justify-center border border-[#c8d4e2] bg-[linear-gradient(180deg,#f4f8fc,#dde8f3)]">
        {g}
      </span>
    ))}
  </div>
);

const tick = (p: number) => 155.6 + (4900 - p) * 0.5955;
const Lab = ({ y, x, c = "text-white", children }: { y: number; x: number; c?: string; children: React.ReactNode }) => (
  <span className={`absolute text-[19.5px] leading-[24px] whitespace-nowrap ${c}`} style={{ top: y - 88 - 12, left: x }}>
    {children}
  </span>
);
const Box = ({ y, h = 23, bg, x, tx, children }: { y: number; h?: number; bg: string; x: number; tx: number; children: React.ReactNode }) => (
  <div className={`absolute right-0 flex items-center text-black text-[19.5px] whitespace-nowrap ${bg}`} style={{ top: y - 88, height: h, left: x, paddingLeft: tx }}>
    {children}
  </div>
);
const Tk = ({ y, x, w }: { y: number; x: number; w: number }) => (
  <span className="absolute h-px bg-white" style={{ top: Math.round(y) - 88, left: x, width: w }} />
);

const LeftAxis = () => (
  <div className="relative w-[60px] h-[902px] border-l-2 border-l-[#a8a8a8] border-r border-r-white shrink-0 bg-black">
    {[4900, 4800, 4700, 4600, 4500, 4400, 4300, 4200, 4100].map((p) => (
      <React.Fragment key={p}>
        <Lab y={tick(p)} x={2}>{p}</Lab>
        <Tk y={tick(p)} x={49} w={8} />
      </React.Fragment>
    ))}
    {[735, 825, 886, 916, 975].map((y) => <Tk key={y} y={y} x={49} w={8} />)}
    <span className="absolute left-0 right-0 h-px bg-white top-[605px]" />
    <div className="absolute left-0 w-[56px] h-[23px] top-[668px] bg-[#0000ff] text-[#000040] text-[19.5px] flex items-center pl-[9px]">0.60</div>
    <div className="absolute left-0 w-[56px] h-[23px] top-[694px] bg-[#808000] text-black text-[19.5px] flex items-center pl-[9px]">0.43</div>
    <Lab y={826} x={7}>0.20</Lab>
    <Lab y={887} x={4}>-0....</Lab>
    <div className="absolute left-0 w-[56px] h-[23px] top-[848px] bg-[#0000ff] text-[#000040] text-[19.5px] flex items-center pl-[2px]">-0.60</div>
  </div>
);
const RightAxis = () => (
  <div className="relative w-[80px] h-[902px] border-l border-l-white border-r-2 border-r-[#e8e8e8] shrink-0 bg-black overflow-hidden">
    {[4900, 4800, 4700, 4600, 4500, 4400, 4300, 4200, 4100].map((p) => (
      <React.Fragment key={p}>
        <Lab y={tick(p)} x={7}>{p}</Lab>
        <Tk y={tick(p)} x={0} w={6} />
      </React.Fragment>
    ))}
    {[732, 762, 854, 916, 978].map((y) => <Tk key={y} y={y} x={0} w={6} />)}
    <span className="absolute left-0 right-0 h-px bg-white top-[605px]" />
    <Box y={118} bg="bg-[#6666ff]" x={0} tx={7}>4947</Box>
    <Box y={152} bg="bg-[#00ff00]" x={0} tx={7}>4889</Box>
    <Lab y={762} x={7}>150.00</Lab>
    <Box y={771} bg="bg-[#808080]" x={0} tx={8}>120.00</Box>
    <Box y={815} bg="bg-[#a8a8a8]" x={0} tx={8}>49.71</Box>
    <Lab y={886} x={7}>-50.00</Lab>
    <Lab y={948} x={7}>-150.00</Lab>
    <Box y={920} bg="bg-[#808080]" x={0} tx={8}>-120.00</Box>
  </div>
);

const dates = ["6/14","6/23","7/04","7/14","7/25","8/03","8/15","8/24","9/05","9/14","9/26","10/05","10/17","10/26","11/06","11/16","11/27","12/07","12/18","1/02","1/11","1/23","2/01","2/12","2/22","3/04",""];
const DateAxis = () => (
  <div className="flex h-[28px] bg-black border-l-2 border-l-[#a8a8a8] border-t border-t-white pl-[75px] text-white text-[20px] shrink-0 overflow-hidden">
    {dates.map((d, i) => (
      <div key={i} className={`relative shrink-0 ${i === 0 ? "w-[64px]" : "w-[66.95px]"}`}>
        <span className={`absolute left-0 top-0 w-px bg-white ${i === 0 ? "h-[10px]" : "h-[4px]"}`} />
        <span className="block w-[54px] text-center leading-[32px] whitespace-nowrap">{d}</span>
      </div>
    ))}
  </div>
);

const Leg = ({ c, ml, children }: { c: string; ml: string; children: React.ReactNode }) => (
  <span className={`${c} ${ml} whitespace-pre`}>{children}</span>
);

const Tab = ({ label, active, w }: { label: string; active?: boolean; w: string }) => (
  <div className={`flex h-[17px] items-stretch shrink-0 ${active ? "bg-white font-bold text-black text-[11.4px]" : "text-[#101010]"} ${w}`}>
    <svg width="6" height="17" className="shrink-0"><path d="M.5 0L5.5 17" stroke="#000" fill="none" /></svg>
    <span className="flex-1 text-center leading-[16px] whitespace-pre">{label}</span>
    <svg width="6" height="17" className="shrink-0"><path d="M5.5 0L.5 17" stroke="#000" fill="none" /></svg>
  </div>
);
const Nav = ({ d }: { d: string }) => (
  <span className="w-[17px] h-[17px] flex items-center justify-center border border-[#c0c0c0] bg-[#f0f0f0]">
    <svg width="9" height="9" viewBox="0 0 9 9" fill="#707070"><path d={d} /></svg>
  </span>
);

const F = ({ w, c = "text-black", children }: { w: string; c?: string; children?: React.ReactNode }) => (
  <div className={`${w} ${c} h-full shrink-0 border-l border-l-[#d8d8d8] pl-[4px] whitespace-nowrap overflow-hidden`}>{children}</div>
);

export default function App() {
  return (
    <div className="relative w-[1920px] h-[1080px] overflow-hidden flex flex-col bg-[#f0f0f0] font-['Liberation_Sans',Arial,sans-serif]">
      {/* title bar */}
      <div className="relative h-[29px] flex items-center shrink-0 border-b border-b-[#3c4a58] bg-[linear-gradient(180deg,rgba(255,255,255,0.1)_0%,rgba(255,255,255,0)_55%,rgba(60,90,130,0.22)_100%),linear-gradient(90deg,#c3d2e6_0%,#c8d6e8_20%,#b4d0ee_42%,#a6d0f4_60%,#a8d3f8_78%,#2e5d8e_78.6%,#2a5a8c_100%)]">
        <svg width="18" height="24" viewBox="0 0 18 24" className="ml-[1px] mt-[1px] shrink-0">
          <path d="M9 1C13 5 16 9 16 14c0 5-3 9-8 9S1 19 2 14C3 10 6 8 5 5c3 2 4 5 3 8 3-3 3-8 1-12z" fill="#1a5fd0" />
          <path d="M8 10c3 2 4 6 1 10-3 1-5-2-4-5 1-2 3-3 3-5z" fill="#8cc8f8" />
        </svg>
        <span className="ml-[6px] text-[14.35px] text-[#101010] whitespace-pre font-['Noto_Sans',sans-serif]">
          TradeStation 8.1 - STOXX_FTSEMIB - STOXX-FTSEMIB sito - [Chart Analysis - GS:STOXX50-DT  60 min  [EUREX] STOXX FUTURES]
        </span>
        <div className="absolute right-[3px] top-0 h-[25px] flex border border-t-0 border-[#3c4f66] rounded-b-[4px] overflow-hidden">
          <span className="w-[37px] border-r border-[#8aa0b8] flex items-end justify-center pb-[5px] bg-[linear-gradient(180deg,#6f8aa8,#3c5f88)]">
            <span className="w-[16px] h-[5px] bg-white border border-[#50647c]" />
          </span>
          <span className="w-[36px] border-r border-[#8aa0b8] flex items-center justify-center bg-[linear-gradient(180deg,#6f8aa8,#3c5f88)]">
            <svg width="19" height="19" viewBox="0 0 19 19" fill="none" stroke="#fff" strokeWidth="2"><rect x="6" y="2" width="11" height="12" /><rect x="2" y="6" width="10" height="11" fill="#56779c" /></svg>
          </span>
          <span className="w-[63px] flex items-center justify-center bg-[linear-gradient(180deg,#d99070,#c84020)]">
            <svg width="20" height="18" viewBox="0 0 20 18" stroke="#fff" strokeWidth="4"><path d="M3 2l14 14M17 2L3 16" /></svg>
          </span>
        </div>
      </div>

      {/* menu bar */}
      <div className="relative h-[29px] flex items-center shrink-0 bg-[linear-gradient(180deg,#fbfbfd_0%,#f6f7fa_30%,#dfe5f2_36%,#e6ebf5_100%)]">
        <svg width="20" height="18" viewBox="0 0 20 18" className="ml-[7px] shrink-0">
          <rect width="20" height="18" fill="#000" />
          <rect y="16" width="20" height="2" fill="#a02020" />
          <path d="M2 12l3-5 2 3 3-6 2 5 3-4 3 5" stroke="#20c040" fill="none" />
        </svg>
        <div className="flex ml-[8px] gap-[14.2px] text-[14px] text-[#101010] font-['Noto_Sans',sans-serif]">
          {["File","Edit","View","Insert","Format","Drawing","Window","Help"].map((m) => <span key={m}>{m}</span>)}
        </div>
        <WinBtns cls="right-[2px] top-[1px]" />
      </div>

      <Toolbar />

      {/* chart window */}
      <div className="relative flex shrink-0 h-[902px]">
        <LeftAxis />
        <div className="relative w-[1780px] shrink-0 bg-black">
          <Chart />
          <div className="absolute left-0 top-0 h-[24px] flex items-center text-[16.3px]">
            <Leg c="text-[#4a5ae0]" ml="">GS:STOXX50-DT - 60 min</Leg>
            <Leg c="text-[#4a5ae0]" ml="ml-[14px]">EUREX</Leg>
            <Leg c="text-white" ml="ml-[9px]">03/13/2024</Leg>
            <Leg c="text-[#00ff00]" ml="ml-[9px]">L=4947</Leg>
            <Leg c="text-white" ml="ml-[9px]">Hi=4953</Leg>
            <Leg c="text-white" ml="ml-[9px]">Lo=4943</Leg>
            <Leg c="text-[#00ff00]" ml="ml-[9px]">C=4947</Leg>
            <Leg c="text-white" ml="ml-[10px]">Close</Leg>
            <Leg c="text-[#00e8ff]" ml="ml-[18px]">4947</Leg>
            <Leg c="text-white" ml="ml-[9px]">HILOW Alert</Leg>
            <Leg c="text-[#00f000]" ml="ml-[18px]">4889</Leg>
            <Leg c="text-white" ml="ml-[9px]">Price Osc</Leg>
            <Leg c="text-[#00d000]" ml="ml-[19px]">21.67</Leg>
            <Leg c="text-[#0000ff]" ml="ml-[9px]">0.00</Leg>
            <Leg c="text-[#ffff00]" ml="ml-[10px]">19.16</Leg>
          </div>
          <div className="absolute left-0 top-[605px] h-[22px] flex items-center text-[16.3px]">
            <Leg c="text-white" ml="">CCI Smothing ekam</Leg>
            <Leg c="text-[#a0a0a0]" ml="ml-[18px]">49.71</Leg>
            <Leg c="text-[#808080]" ml="ml-[11px]">120.00</Leg>
            <Leg c="text-[#808080]" ml="ml-[10px]">-120.00</Leg>
            <Leg c="text-[#404040]" ml="ml-[9px]">49.71</Leg>
            <Leg c="text-white" ml="ml-[10px]">Cilcli 64</Leg>
            <Leg c="text-[#808000]" ml="ml-[17px]">0.43</Leg>
            <Leg c="text-[#ffff00]" ml="ml-[10px]">0.00</Leg>
            <Leg c="text-[#0000ff]" ml="ml-[10px]">0.60</Leg>
            <Leg c="text-[#0000ff]" ml="ml-[10px]">-0.60</Leg>
          </div>
        </div>
        <RightAxis />
        <WinBtns cls="right-[-3px] top-[9px]" />
      </div>

      <DateAxis />

      {/* scrollbar */}
      <div className="relative flex items-center justify-between h-[23px] bg-[#f0f0f0] shrink-0 px-[9px]">
        <span className="w-0 h-0 border-y-[5px] border-y-transparent border-r-[5px] border-r-[#505050]" />
        <div className="flex items-center">
          <span className="w-[18px] h-[18px] mr-[8px] flex items-center justify-center gap-[1px] border border-[#a8a8a8] bg-[#e4e4e4]">
            <span className="w-px h-[8px] bg-[#707070]" />
            <span className="w-px h-[8px] bg-[#707070] mx-[1px]" />
            <span className="w-px h-[8px] bg-[#707070]" />
          </span>
          <span className="w-0 h-0 border-y-[5px] border-y-transparent border-l-[5px] border-l-[#505050]" />
        </div>
      </div>

      {/* tabs */}
      <div className="flex h-[18px] shrink-0 items-center border-t border-t-black text-[12px] bg-[#f0f0f0]">
        <div className="flex w-[68px] shrink-0">
          <Nav d="M1 1h1v7H1zM8 1v7L3 4.5z" />
          <Nav d="M7 1v7L2 4.5z" />
          <Nav d="M2 1v7l5-3.5z" />
          <Nav d="M1 1v7l5-3.5zM7 1h1v7H7z" />
        </div>
        <div className="flex pl-[3px] border-b border-b-black">
          <Tab w="w-[86px]" label="STOX C164" />
          <Tab w="w-[79px]" label="STOX C55" />
          <Tab w="w-[82px]" label="STOX  C30" />
          <Tab w="w-[102px]" label="STOX  8 Giorni" />
          <Tab w="w-[105px]" label="FTSEMIB C164" />
          <Tab w="w-[98px]" label="FTSEMIB C55" />
          <Tab w="w-[98px]" label="FTSEMIB C30" />
          <Tab w="w-[121px]" label="FTSEMIB  8 Giorni" />
          <Tab w="w-[137px]" active label="STOXX-FTSEMIB sito" />
          <Tab w="w-[111px]" label="PERCENTUALE" />
          <Tab w="w-[86px]" label="C164_3_Int" />
          <Tab w="w-[89px]" label="ZONE STOX" />
          <Tab w="w-[108px]" label="ZONE FTSEMIB" />
          <Tab w="w-[145px]" label="Untitled Workspace:  6" />
        </div>
      </div>

      {/* status bar */}
      <div className="flex h-[22px] items-center leading-[22px] text-[14.4px] bg-[#f0f0f0] shrink-0 font-['Noto_Sans',sans-serif] tracking-[-0.2px]">
        <div className="w-[1092px] pl-[2px] text-[#101010] shrink-0">For Help, press F1</div>
        <F w="w-[51px]">Acct:</F>
        <F w="w-[91px]">Open Psns:</F>
        <F w="w-[64px]">DT BP:</F>
        <F w="w-[86px]">Purch Pwr:</F>
        <F w="w-[94px]">Closed P/L:</F>
        <F w="w-[60px]">RT TE:</F>
        <F w="w-[83px]">Open P/L:</F>
        <F w="w-[88px]" c="text-[#1a9a1a]">ORDER BAR</F>
        <F w="w-[69px]" c="text-[#00a060]">MACROS</F>
        <div className="w-[18px] h-full shrink-0 border-l border-l-[#d8d8d8] flex justify-center pt-[4px]">
          <span className="w-[11px] h-[11px] rounded-full bg-[radial-gradient(circle_at_35%_30%,#ff9090,#e00000_55%,#700000)]" />
        </div>
        <F w="w-[124px]">13/03/2024 09:53</F>
      </div>
    </div>
  );
}
